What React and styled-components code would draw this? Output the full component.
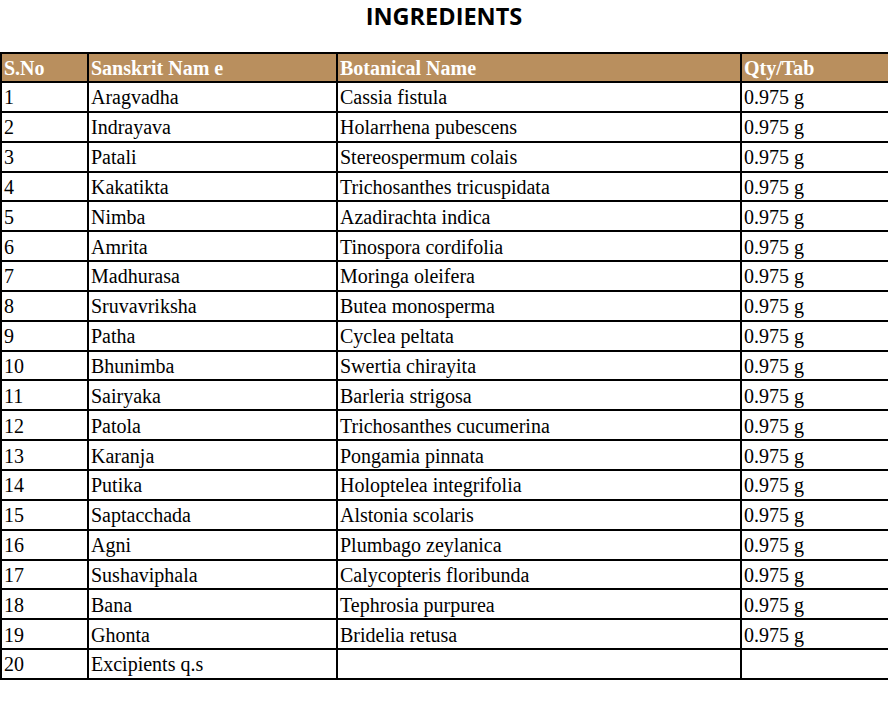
import React from "react";
import styled, { createGlobalStyle } from "styled-components";

const Global = createGlobalStyle`
  html, body { margin: 0; padding: 0; background: #ffffff; }
  body { font-family: "Liberation Serif", "Times New Roman", serif; }
`;

const Page = styled.div`
  width: 888px;
`;

const Title = styled.h1`
  margin: 0;
  height: 52px;
  text-align: center;
  font-family: "Open Sans", "Liberation Sans", sans-serif;
  font-weight: 700;
  font-size: 23.5px;
  line-height: 32px;
  color: #000;
  box-sizing: border-box;
`;

const Table = styled.table`
  width: 888px;
  border-collapse: collapse;
  table-layout: fixed;
  font-family: "Liberation Serif", "Times New Roman", serif;
  font-size: 20px;
`;

const HeadRow = styled.tr`
  height: 29px;
  background: #b98f5e;
`;

const Row = styled.tr`
  height: 29.85px;
`;

const Th = styled.th`
  border: 2px solid #000;
  padding: 1px 0 0 2px;
  text-align: left;
  font-weight: 700;
  color: #ffffff;
  white-space: nowrap;
  overflow: hidden;
`;

const Td = styled.td`
  border: 2px solid #000;
  padding: 1px 0 0 2px;
  text-align: left;
  color: #000;
  white-space: nowrap;
  overflow: hidden;
  line-height: 22px;
`;

const rows = [
  ["Aragvadha", "Cassia fistula"],
  ["Indrayava", "Holarrhena pubescens"],
  ["Patali", "Stereospermum colais"],
  ["Kakatikta", "Trichosanthes tricuspidata"],
  ["Nimba", "Azadirachta indica"],
  ["Amrita", "Tinospora cordifolia"],
  ["Madhurasa", "Moringa oleifera"],
  ["Sruvavriksha", "Butea monosperma"],
  ["Patha", "Cyclea peltata"],
  ["Bhunimba", "Swertia chirayita"],
  ["Sairyaka", "Barleria strigosa"],
  ["Patola", "Trichosanthes cucumerina"],
  ["Karanja", "Pongamia pinnata"],
  ["Putika", "Holoptelea integrifolia"],
  ["Saptacchada", "Alstonia scolaris"],
  ["Agni", "Plumbago zeylanica"],
  ["Sushaviphala", "Calycopteris floribunda"],
  ["Bana", "Tephrosia purpurea"],
  ["Ghonta", "Bridelia retusa"],
];

export default function App() {
  return (
    <Page>
      <Global />
      <Title>INGREDIENTS</Title>
      <Table>
        <colgroup>
          <col style={{ width: 87 }} />
          <col style={{ width: 249 }} />
          <col style={{ width: 404 }} />
          <col style={{ width: 148 }} />
        </colgroup>
        <thead>
          <HeadRow>
            <Th>S.No</Th>
            <Th>Sanskrit Nam e</Th>
            <Th>Botanical Name</Th>
            <Th>Qty/Tab</Th>
          </HeadRow>
        </thead>
        <tbody>
          {rows.map(([s, b], i) => (
            <Row key={i}>
              <Td>{i + 1}</Td>
              <Td>{s}</Td>
              <Td>{b}</Td>
              <Td>0.975 g</Td>
            </Row>
          ))}
          <Row>
            <Td>20</Td>
            <Td>Excipients q.s</Td>
            <Td></Td>
            <Td></Td>
          </Row>
        </tbody>
      </Table>
    </Page>
  );
}
